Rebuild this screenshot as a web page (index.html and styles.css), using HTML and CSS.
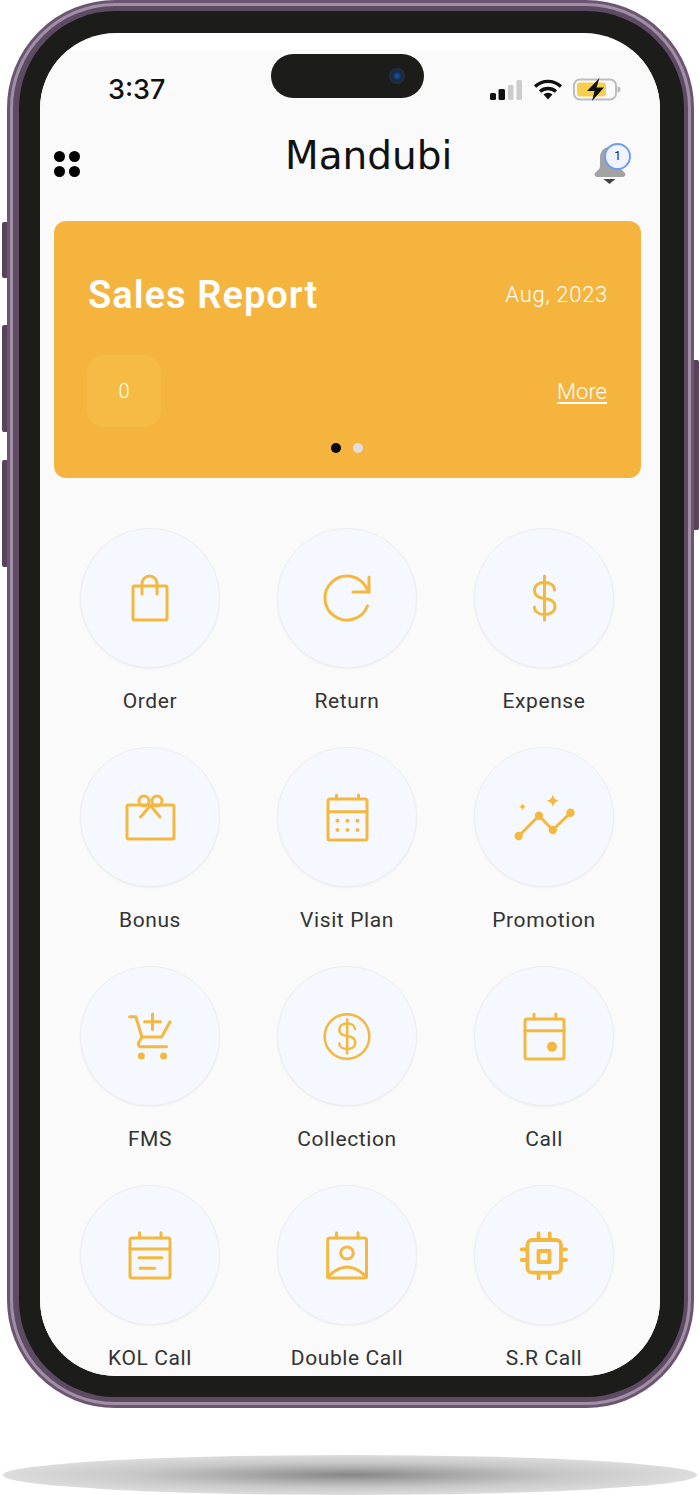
FILE: index.html
```html
<!DOCTYPE html>
<html lang="en">
<head>
  <meta charset="UTF-8">
  <meta name="viewport" content="width=device-width, initial-scale=1.0">
  <title>Mandubi</title>
  <link rel="stylesheet" href="styles.css">
</head>
<body>
  <div class="device">
    <span class="side-btn side-mute"></span>
    <span class="side-btn side-up"></span>
    <span class="side-btn side-down"></span>
    <span class="side-btn side-power"></span>
    <div class="bezel">
      <div class="screen">
        <div class="island"><span class="camera"></span></div>
        <div class="app">
          <div class="status">
            <span class="time">3:37</span>
            <div class="status-icons">
              <svg class="signal" width="33" height="21" viewBox="0 0 33 21">
                <rect x="0" y="14" width="6" height="7" rx="1.5" fill="#111"/>
                <rect x="8.5" y="10" width="6.5" height="11" rx="1.5" fill="#111"/>
                <rect x="18" y="6" width="5.5" height="15" rx="1.5" fill="#ccc"/>
                <rect x="26.5" y="1" width="5.5" height="20" rx="1.5" fill="#ccc"/>
              </svg>
              <svg class="wifi" width="30" height="21" viewBox="0 0 30 21">
                <path d="M2 7.5a19 19 0 0 1 26 0" fill="none" stroke="#111" stroke-width="3.4"/>
                <path d="M7 12.5a12 12 0 0 1 16 0" fill="none" stroke="#111" stroke-width="3.4"/>
                <path d="M10.5 15.5a6.500 6.500 0 0 1 9 0L15 20.500z" fill="#111"/>
              </svg>
              <svg class="battery" width="48" height="23" viewBox="0 0 48 23">
                <rect x="1" y="1.500" width="42" height="20" rx="6" fill="none" stroke="#bdbdbd" stroke-width="2"/>
                <rect x="4" y="4.500" width="29" height="14" rx="3" fill="#f6d04d"/>
                <path d="M44.500 8.500a3 3 0 0 1 0 6z" fill="#bdbdbd"/>
                <path d="M26.500 0L14 13h7.500l-2.500 10L31 9.500h-7.500z" fill="#111"/>
              </svg>
            </div>
          </div>

          <div class="topbar">
            <span class="menu-dots"><i></i><i></i><i></i><i></i></span>
            <h1 class="brand">Mandubi</h1>
            <div class="bell">
              <svg width="32" height="40" viewBox="0 0 32 40">
                <path d="M16 2c-7 0-10 5-10 11v8c0 3-2 4-5 7-1 2 0 4 3 4h24c3 0 4-2 3-4-3-3-5-4-5-7v-8c0-6-3-11-10-11z" fill="#a3a3a3"/>
                <path d="M9.500 34h12L15.500 39z" fill="#444"/>
              </svg>
              <span class="badge">1</span>
            </div>
          </div>

          <section class="report">
            <div class="report-row report-row-top">
              <h2 class="report-title">Sales Report</h2>
              <span class="report-date">Aug, 2023</span>
            </div>
            <div class="report-row report-row-low">
              <span class="report-count">0</span>
              <a class="report-more">More</a>
            </div>
            <div class="dots"><span class="dot dot-on"></span><span class="dot"></span></div>
          </section>

          <div class="menu">
            <div class="menu-item">
              <div class="circle">
                <svg class="icon" viewBox="0 0 70 70">
                  <rect x="18" y="23" width="34" height="34" rx="1.500"/>
                  <path d="M27 31V20.500a7.500 7.500 0 0 1 15 0V31"/>
                </svg>
              </div>
              <span class="label">Order</span>
            </div>
            <div class="menu-item">
              <div class="circle">
                <svg class="icon" viewBox="0 0 70 70">
                  <path d="M55.500 43A22 22 0 1 1 54 24L57 29"/>
                  <path d="M57 14V29H41"/>
                </svg>
              </div>
              <span class="label">Return</span>
            </div>
            <div class="menu-item">
              <div class="circle">
                <svg class="icon" viewBox="0 0 70 70">
                  <path d="M35.500 13V57"/>
                  <path d="M45.500 27C45.500 22 41 19.500 35.500 19.500C30 19.500 25.500 22 25.500 27.500C25.500 33 30 35 35.500 35.500C41 36 46 38 46 43.500C46 49 41 51.500 35.500 51.500C30 51.500 25.500 49 25.500 44"/>
                </svg>
              </div>
              <span class="label">Expense</span>
            </div>

            <div class="menu-item">
              <div class="circle">
                <svg class="icon" viewBox="0 0 70 70">
                  <rect x="12" y="23" width="47" height="34" rx="1.500"/>
                  <circle cx="29" cy="19" r="5"/>
                  <circle cx="42" cy="19" r="5"/>
                  <path d="M25.500 35L35.500 23.500L45 35"/>
                </svg>
              </div>
              <span class="label">Bonus</span>
            </div>
            <div class="menu-item">
              <div class="circle">
                <svg class="icon" viewBox="0 0 70 70">
                  <rect x="16" y="17" width="39" height="41" rx="2"/>
                  <path d="M16 29.700H55M24.500 13V17M46.500 13V17"/>
                  <g class="fill">
                    <circle cx="25.500" cy="38.700" r="2"/><circle cx="35.500" cy="38.700" r="2"/><circle cx="45.500" cy="38.700" r="2"/>
                    <circle cx="25.500" cy="48" r="2"/><circle cx="35.500" cy="48" r="2"/><circle cx="45.500" cy="48" r="2"/>
                  </g>
                </svg>
              </div>
              <span class="label">Visit Plan</span>
            </div>
            <div class="menu-item">
              <div class="circle">
                <svg class="icon" viewBox="0 0 70 70">
                  <path d="M9.700 54L30 33.700L43.800 48L61.500 30.700"/>
                  <g class="fill">
                    <circle cx="9.700" cy="54" r="4.200"/><circle cx="30" cy="33.700" r="4.200"/><circle cx="43.800" cy="48" r="4.200"/><circle cx="61.500" cy="30.700" r="4.200"/>
                    <path d="M43.800 12.500Q44.800 17.700 50 18.700Q44.800 19.700 43.800 24.900Q42.800 19.700 37.600 18.700Q42.800 17.700 43.800 12.500z"/>
                    <path d="M13.500 21Q14 24.200 17 24.700Q14 25.200 13.500 28.400Q13 25.200 10 24.700Q13 24.200 13.500 21z"/>
                  </g>
                </svg>
              </div>
              <span class="label">Promotion</span>
            </div>

            <div class="menu-item">
              <div class="circle">
                <svg class="icon" viewBox="0 0 70 70">
                  <path d="M14.500 15.700H20.800L27 36H46.700L55 20.700"/>
                  <path d="M27 36L23.400 42Q23 45.700 26 45.700H51.500"/>
                  <path d="M29.500 20.700H45.500M37.500 13V28.500"/>
                  <g class="fill"><circle cx="26.400" cy="55" r="3.500"/><circle cx="48.600" cy="55" r="3.500"/></g>
                </svg>
              </div>
              <span class="label">FMS</span>
            </div>
            <div class="menu-item">
              <div class="circle">
                <svg class="icon icon-thin" viewBox="0 0 70 70">
                  <circle cx="35" cy="35.500" r="22.300"/>
                  <path d="M35.200 18.500V52.500"/>
                  <path d="M43 28C43 24.500 39.500 22.500 35.200 22.500C31 22.500 27.300 24.500 27.300 28.500C27.300 32.500 31 34.500 35.200 35C39.500 35.500 43.300 37.500 43.300 42C43.300 46 39.500 48 35.200 48C31 48 27.300 46 27.300 42.500"/>
                </svg>
              </div>
              <span class="label">Collection</span>
            </div>
            <div class="menu-item">
              <div class="circle">
                <svg class="icon" viewBox="0 0 70 70">
                  <rect x="16" y="18" width="39" height="40" rx="2"/>
                  <path d="M16 29.700H55M25 13V18M46.800 13V18"/>
                  <circle class="fill" cx="43" cy="45.700" r="5"/>
                </svg>
              </div>
              <span class="label">Call</span>
            </div>

            <div class="menu-item">
              <div class="circle">
                <svg class="icon" viewBox="0 0 70 70">
                  <rect x="15" y="18" width="40" height="40" rx="2"/>
                  <path d="M15 29H55M24.500 12.700V18M46 12.700V18M24 37.700H47M25 48.300H39.700"/>
                </svg>
              </div>
              <span class="label">KOL Call</span>
            </div>
            <div class="menu-item">
              <div class="circle">
                <svg class="icon" viewBox="0 0 70 70">
                  <rect x="15.700" y="18" width="38.800" height="40" rx="2"/>
                  <path d="M24.500 12.700V18M46 12.700V18"/>
                  <ellipse cx="35" cy="33" rx="6.300" ry="6"/>
                  <path d="M15.700 57Q35 37 54.500 57"/>
                </svg>
              </div>
              <span class="label">Double Call</span>
            </div>
            <div class="menu-item">
              <div class="circle">
                <svg class="icon icon-bold" viewBox="0 0 70 70">
                  <rect x="18.400" y="20" width="33.600" height="32.700" rx="5"/>
                  <rect x="29.500" y="31" width="11" height="11"/>
                  <path d="M29.600 13.300V20M40.700 13.300V20M29.600 52.700V58.300M40.700 52.700V58.300M12.600 29.300H18.400M12.600 40H18.400M52 29.300H57M52 40H57"/>
                </svg>
              </div>
              <span class="label">S.R Call</span>
            </div>
          </div>
        </div>
      </div>
    </div>
  </div>
  <div class="ground-shadow"></div>
</body>
</html>
```

FILE: styles.css
```css
* {
  box-sizing: border-box;
}
html, body {
  margin: 0;
  height: 1495px;
  overflow: hidden;
  background: #fff;
}
body {
  font-family: Roboto, "Liberation Sans", sans-serif;
  color: #222;
}

/* phone body */
.device {
  position: relative;
  width: 687px;
  height: 1408px;
  margin-left: 7px;
  padding: 3px;
  border-radius: 108px;
  background: #a090a5;
  border: 3px solid #6d5572;
}
.bezel {
  height: 100%;
  padding: 22px 24px 21px 21px;
  border-radius: 102px;
  background: #1c1c1a;
  border: 5px solid #5e4a63;
  border-left-width: 6px;
  border-right-width: 4px;
}
.screen {
  position: relative;
  height: 100%;
  padding-top: 17px;
  border-radius: 76px;
  background: #fff;
  overflow: hidden;
}
.app {
  height: 100%;
  background: #fafafa;
}
.side-btn {
  position: absolute;
  width: 5px;
  background: #5a425c;
  border-radius: 2px 0 0 2px;
}
.side-mute { left: -8px; top: 219px; height: 56px; }
.side-up { left: -8px; top: 322px; height: 107px; }
.side-down { left: -8px; top: 457px; height: 107px; }
.side-power { right: -8px; top: 357px; height: 170px; border-radius: 0 2px 2px 0; }

.island {
  position: absolute;
  left: 231px;
  top: 21px;
  width: 153px;
  height: 44px;
  border-radius: 22px;
  background: #1c1c1a;
  z-index: 2;
}
.camera {
  position: absolute;
  right: 19px;
  top: 14px;
  width: 16px;
  height: 16px;
  border-radius: 50%;
  background: radial-gradient(circle, #1b5fa8 0, #12294a 40%, #2c2f33 70%, #1c1c1a 100%);
}

/* status bar */
.status {
  display: flex;
  align-items: center;
  justify-content: space-between;
  height: 78px;
  padding: 0 39px 0 68px;
}
.time {
  font-family: Inter, Roboto, sans-serif;
  font-size: 27px;
  font-weight: 500;
  color: #111;
}
.status-icons {
  display: flex;
  align-items: center;
  gap: 10px;
}

/* title row */
.topbar {
  display: flex;
  align-items: flex-start;
  height: 93px;
  padding: 0 34px 0 14px;
}
.menu-dots {
  display: grid;
  grid-template-columns: 11px 11px;
  gap: 4px;
  margin-top: 23px;
}
.menu-dots i {
  width: 11px;
  height: 11px;
  border-radius: 50%;
  background: #000;
}
.brand {
  margin: 0 0 0 205px;
  font-family: "DejaVu Sans", sans-serif;
  font-size: 39px;
  font-weight: 400;
  line-height: 56px;
  color: #111;
}
.bell {
  position: relative;
  width: 32px;
  height: 40px;
  margin: 17px 0 0 auto;
}
.bell svg {
  display: block;
}
.badge {
  position: absolute;
  left: 10px;
  top: -2px;
  width: 27px;
  height: 27px;
  border: 2px solid #6f9bf2;
  border-radius: 50%;
  background: #eef3fe;
  font-size: 12px;
  line-height: 23px;
  text-align: center;
  color: #222;
}

/* sales card */
.report {
  width: 587px;
  height: 257px;
  margin: 0 0 0 14px;
  padding: 0 34px;
  border-radius: 12px;
  background: #f4b43e;
  color: #fff;
}
.report-row {
  display: flex;
  align-items: center;
  justify-content: space-between;
  height: 134px;
}
.report-row-top {
  padding-top: 14px;
}
.report-row-low {
  height: 72px;
}
.report-title {
  margin: 0;
  font-size: 38px;
  font-weight: 600;
  letter-spacing: 1.05px;
}
.report-date {
  margin: -2px -1px 0 0;
  font-size: 22px;
  font-weight: 300;
  letter-spacing: 0.7px;
}
.report-count {
  width: 74px;
  height: 72px;
  margin-left: -1px;
  border-radius: 18px;
  background: #f5bb45;
  font-size: 20px;
  font-weight: 300;
  line-height: 72px;
  text-align: center;
}
.report-more {
  font-size: 22px;
  font-weight: 300;
  text-decoration: underline;
  text-underline-offset: 3px;
}
.dots {
  display: flex;
  justify-content: center;
  gap: 12px;
  margin-top: 16px;
  padding-right: 2px;
}
.dot {
  width: 10px;
  height: 10px;
  border-radius: 50%;
  background: #dedede;
}
.dot-on {
  background: #000;
}

/* menu grid */
.menu {
  display: grid;
  grid-template-columns: repeat(3, 197px);
  grid-auto-rows: 219px;
  margin: 50px 0 0 11.5px;
}
.menu-item {
  display: flex;
  flex-direction: column;
  align-items: center;
}
.circle {
  display: flex;
  flex: none;
  align-items: center;
  justify-content: center;
  width: 140px;
  height: 140px;
  border: 1px solid #eeeef0;
  border-radius: 50%;
  background: #f5f8fe;
  box-shadow: 0 1px 2px rgba(0, 0, 0, 0.05);
}
.icon {
  width: 70px;
  height: 70px;
  fill: none;
  stroke: #f5b83f;
  stroke-width: 3;
  stroke-linecap: round;
  stroke-linejoin: round;
}
.icon-thin {
  stroke-width: 2.5;
}
.icon-bold {
  stroke-width: 3.8;
}
.icon .fill {
  fill: #f5b83f;
  stroke: none;
}
.label {
  margin-top: 21px;
  font-size: 21px;
  letter-spacing: 0.6px;
  color: #333;
}

.ground-shadow {
  width: 694px;
  height: 40px;
  margin: 47px 0 0 3px;
  border-radius: 50%;
  background: radial-gradient(ellipse closest-side, #868686 0, #a8a8a8 30%, #c8c8c8 62%, #dcdcdc 100%);
}
```
